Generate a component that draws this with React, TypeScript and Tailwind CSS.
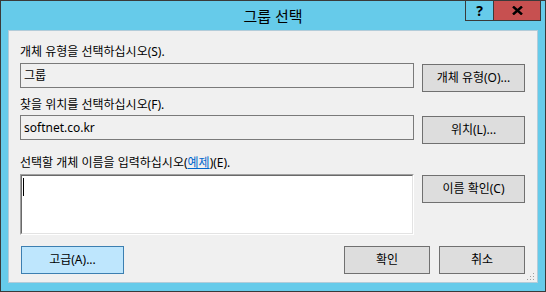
import React from "react";

const font = { fontFamily: '"Noto Sans", "Noto Sans CJK KR", sans-serif' };

function Btn({ children, className = "" }: { children: React.ReactNode; className?: string }) {
  return (
    <div
      className={`flex items-center justify-center h-[28px] border border-[#707070] bg-[#dddddd] text-[12px] text-black leading-none ${className}`}
    >
      {children}
    </div>
  );
}

export default function App() {
  return (
    <div className="w-[546px] h-[292px] bg-[#66cbea] border border-[#3a3a3a] flex flex-col" style={font}>
      {/* title bar */}
      <div className="h-[29px] grid grid-cols-[1fr_auto_1fr]">
        <div />
        <div className="flex items-center text-[15px] text-black leading-none pt-px">그룹 선택</div>
        <div className="flex justify-end items-start pr-[4px]">
          <div className="w-[28px] h-[20px] border-l border-b border-[#3a3a3a] flex items-center justify-center text-[14px] font-bold text-black leading-none">
            ?
          </div>
          <div className="w-[48px] h-[20px] border-l border-r border-b border-[#3a3a3a] bg-[#c75050] flex items-center justify-center">
            <svg width="11" height="9" viewBox="0 0 11 9">
              <path d="M1 0.5 L10 8.5 M10 0.5 L1 8.5" stroke="#000" strokeWidth="2.4" />
            </svg>
          </div>
        </div>
      </div>

      {/* client */}
      <div className="relative mx-[7px] h-[253px] bg-[#f0f0f0] border border-[#b3ccd9] pl-[11px] pt-[12px] text-[12px] text-black">
        <div className="h-[18px] leading-[18px]">개체 유형을 선택하십시오(S).</div>
        <div className="mt-[2px] flex gap-[8px]">
          <div className="w-[394px] h-[25px] border border-[#7a7a7a] bg-[#f0f0f0] flex items-center pl-[3px] leading-none">
            그룹
          </div>
          <Btn className="w-[103px] mt-px">개체 유형(O)...</Btn>
        </div>

        <div className="mt-[4px] h-[18px] leading-[18px]">찾을 위치를 선택하십시오(F).</div>
        <div className="mt-px flex gap-[8px]">
          <div className="w-[394px] h-[25px] border border-[#7a7a7a] bg-[#f0f0f0] flex items-center pl-[3px] leading-none">
            softnet.co.kr
          </div>
          <Btn className="w-[103px] mt-px">위치(L)...</Btn>
        </div>

        <div className="mt-[10px] h-[18px] leading-[18px]">
          선택할 개체 이름을 입력하십시오(<span className="text-[#0066cc] underline">예제</span>)(E).
        </div>
        <div className="mt-[2px] flex gap-[8px]">
          <div className="w-[394px] h-[61px] border-t border-l border-[#a0a0a0] border-b-white border-r-white border-b border-r">
            <div className="w-full h-full border-t border-l border-[#696969] border-b border-r border-b-[#e3e3e3] border-r-[#e3e3e3] bg-white pl-px pt-[2px]">
              <div className="w-px h-[18px] bg-black" />
            </div>
          </div>
          <Btn className="w-[103px] mt-px">이름 확인(C)</Btn>
        </div>

        <div className="mt-[11px] w-[505px] flex justify-between">
          <div className="ml-px w-[103px] h-[28px] border border-[#3c7fb1] bg-[#bee6fd] flex items-center justify-center leading-none">
            고급(A)...
          </div>
          <div className="flex gap-[9px]">
            <Btn className="w-[86px]">확인</Btn>
            <Btn className="w-[86px]">취소</Btn>
          </div>
        </div>

        {/* size grip */}
        <svg className="absolute right-[2px] bottom-[1px]" width="9" height="9" viewBox="0 0 9 9">
          <rect x="7" y="1" width="1" height="1" fill="#a0a0a0" />
          <rect x="4" y="4" width="1" height="1" fill="#a0a0a0" />
          <rect x="7" y="4" width="1" height="1" fill="#a0a0a0" />
          <rect x="1" y="7" width="1" height="1" fill="#a0a0a0" />
          <rect x="4" y="7" width="1" height="1" fill="#a0a0a0" />
          <rect x="7" y="7" width="1" height="1" fill="#a0a0a0" />
        </svg>
      </div>
    </div>
  );
}
